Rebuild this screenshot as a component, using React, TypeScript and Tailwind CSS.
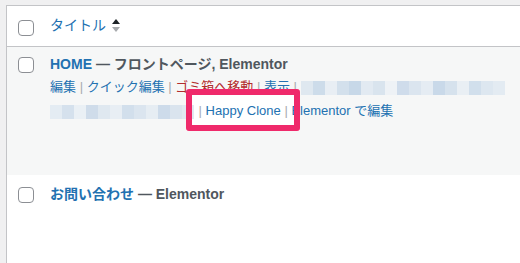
import React from 'react';

const blurLine1 = ['#dfe8f0', '#cddcea', '#e8eef4', '#d3e0ec', '#c7d8e8', '#e2eaf2', '#d9e4ee', '#eef2f6', '#cfdceb', '#dbe5ef', '#e5ecf3', '#c9d9e9', '#d6e2ed', '#e9eff4', '#d1dfec', '#dde7f0', '#e3ebf2'];
const blurLine2 = ['#e4ecf3', '#d5e1ed', '#eaf0f5', '#cfdcea', '#dfe8f0', '#e8eef4', '#d2dfec', '#dbe5ef', '#e6edf3', '#cddbea', '#dae4ee', '#e1e9f1'];

function Checkbox() {
    return <div className="w-4 h-4 rounded-[4px] border border-[#8c8f94] bg-white shrink-0" />;
}

function Blur({ colors, w }: { colors: string[]; w: number }) {
    return (
        <span className="inline-flex align-middle h-[14px] overflow-hidden" style={{ width: w }}>
            {colors.map((c, i) => (
                <span key={i} className="h-full w-[12px] shrink-0" style={{ backgroundColor: c }} />
            ))}
        </span>
    );
}

export default function App() {
    return (
        <div className="w-[520px] h-[263px] overflow-hidden bg-[#f0f0f1] pt-[5px] pl-[6px] font-['Liberation_Sans','Noto_Sans_CJK_JP',sans-serif]">
            <div className="h-full border-l border-t border-[#c3c4c7] bg-white">
                {/* header */}
                <div className="h-[41px] border-b border-[#c3c4c7] flex">
                    <div className="w-[43px] pl-[11px] pt-[14px]">
                        <Checkbox />
                    </div>
                    <div className="pt-[9px] flex items-start gap-[6px] text-[14px] leading-[20px] text-[#2271b1]">
                        <span>タイトル</span>
                        <svg width="8" height="13" viewBox="0 0 8 13" className="mt-[4px]">
                            <path d="M4 0 L8 5 L0 5 Z" fill="#1d2327" />
                            <path d="M4 13 L8 8 L0 8 Z" fill="#a7aaad" />
                        </svg>
                    </div>
                </div>

                {/* row 1 */}
                <div className="h-[128px] bg-[#f6f7f7] flex">
                    <div className="w-[43px] pl-[11px] pt-[10px]">
                        <Checkbox />
                    </div>
                    <div className="relative flex-1 pt-[7px]">
                        <div className="text-[14px] leading-[20px] font-bold text-[#50575e] whitespace-nowrap">
                            <span className="text-[#2271b1]">HOME</span> — フロントページ, Elementor
                        </div>
                        <div className="absolute left-[136px] top-[42px] w-[114px] h-[42px] bg-white" />
                        <div className="relative z-10 text-[13px] leading-[24px] text-[#a7aaad] whitespace-nowrap mt-[1px]">
                            <span className="text-[#2271b1]">編集</span> | <span className="text-[#2271b1]">クイック編集</span> | <span className="text-[#b32d2e]">ゴミ箱へ移動</span> | <span className="text-[#2271b1]">表示</span> | <Blur colors={blurLine1} w={210} />
                        </div>
                        <div className="relative z-10 text-[13px] leading-[24px] text-[#a7aaad] whitespace-nowrap">
                            <Blur colors={blurLine2} w={145} /> | <span className="text-[#2271b1]">Happy Clone</span> | <span className="text-[#2271b1]">Elementor で編集</span>
                        </div>
                        <div className="absolute z-20 left-[136px] top-[42px] w-[114px] h-[42px] border-[6px] border-[#ef2a6b] rounded-[3px]" />
                    </div>
                </div>

                {/* row 2 */}
                <div className="flex">
                    <div className="w-[43px] pl-[11px] pt-[12px]">
                        <Checkbox />
                    </div>
                    <div className="pt-[9px] text-[14px] leading-[20px] font-bold text-[#50575e] whitespace-nowrap">
                        <span className="text-[#2271b1]">お問い合わせ</span> — Elementor
                    </div>
                </div>
            </div>
        </div>
    );
}
